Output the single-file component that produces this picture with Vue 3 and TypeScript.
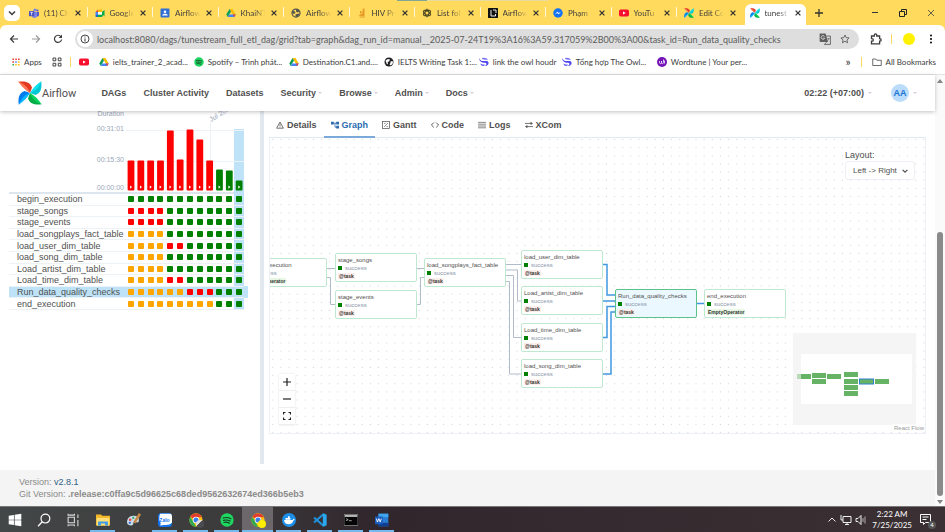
<script setup lang="ts">
interface BrowserTab {
  icon: string
  title: string
  active?: boolean
}

interface Bookmark {
  icon: string
  title: string
  short?: boolean
}

type RunState = 's' | 'f' | 'u'

interface TaskRow {
  name: string
  states: RunState[]
}

interface GraphNode {
  id: string
  x: number
  y: number
  operator: string
  selected?: boolean
}

const browserTabs: BrowserTab[] = [
  { icon: 'teams', title: '(11) Ch' },
  { icon: 'meet', title: 'Google' },
  { icon: 'classroom', title: 'Airflow' },
  { icon: 'drive', title: 'KhaiNT' },
  { icon: 'globe', title: 'Airflow' },
  { icon: 'flame', title: 'HIV Pr' },
  { icon: 'openai', title: 'List fol' },
  { icon: 'notion', title: 'Airflow' },
  { icon: 'messenger', title: 'Phạm' },
  { icon: 'youtube', title: 'YouTu' },
  { icon: 'pinwheel', title: 'Edit Co' },
  { icon: 'pinwheel', title: 'tunest', active: true },
]

const bookmarks: Bookmark[] = [
  { icon: 'drive', title: 'ielts_trainer_2_acad...' },
  { icon: 'spotify', title: 'Spotify – Trình phát...' },
  { icon: 'drive', title: 'Destination.C1.and....' },
  { icon: 'world', title: 'IELTS Writing Task 1:...' },
  { icon: 'swirl', title: 'link the owl houdr', short: true },
  { icon: 'swirl', title: 'Tổng hợp The Owl...' },
  { icon: 'wordtune', title: 'Wordtune | Your per...' },
]

const url =
  'localhost:8080/dags/tunestream_full_etl_dag/grid?tab=graph&dag_run_id=manual__2025-07-24T19%3A16%3A59.317059%2B00%3A00&task_id=Run_data_quality_checks'

const navLinks = [
  { label: 'DAGs', menu: false },
  { label: 'Cluster Activity', menu: false },
  { label: 'Datasets', menu: false },
  { label: 'Security', menu: true },
  { label: 'Browse', menu: true },
  { label: 'Admin', menu: true },
  { label: 'Docs', menu: true },
]

const runs = [30, 30, 30, 30, 60, 31, 61, 51, 30, 21, 20, 10].map((height, i) => ({
  height,
  failed: i < 9,
  x: 118.6 + i * 9.83,
}))

const row = (name: string, states: string): TaskRow => ({
  name,
  states: states.split('') as RunState[],
})

const tasks: TaskRow[] = [
  row('begin_execution', 'ssssssssssss'),
  row('stage_songs', 'ffffssssssss'),
  row('stage_events', 'ffffssssssss'),
  row('load_songplays_fact_table', 'uuuussssssss'),
  row('load_user_dim_table', 'uuuuffssssss'),
  row('load_song_dim_table', 'uuuussssssss'),
  row('Load_artist_dim_table', 'uuuussssssss'),
  row('Load_time_dim_table', 'uuuuffssssss'),
  row('Run_data_quality_checks', 'uuuuuufffsss'),
  row('end_execution', 'uuuuuuuuusss'),
]
const selectedTask = 'Run_data_quality_checks'

const viewTabs = [
  { icon: 'details', label: 'Details' },
  { icon: 'graph', label: 'Graph', active: true },
  { icon: 'gantt', label: 'Gantt' },
  { icon: 'code', label: 'Code' },
  { icon: 'logs', label: 'Logs' },
  { icon: 'xcom', label: 'XCom' },
]

const nodes: GraphNode[] = [
  { id: 'begin_execution', x: -25, y: 120, operator: 'EmptyOperator' },
  { id: 'stage_songs', x: 65, y: 115, operator: '@task' },
  { id: 'stage_events', x: 65, y: 152, operator: '@task' },
  { id: 'load_songplays_fact_table', x: 154, y: 120, operator: '@task' },
  { id: 'load_user_dim_table', x: 251, y: 112, operator: '@task' },
  { id: 'Load_artist_dim_table', x: 251, y: 148, operator: '@task' },
  { id: 'Load_time_dim_table', x: 251, y: 185, operator: '@task' },
  { id: 'load_song_dim_table', x: 251, y: 221, operator: '@task' },
  { id: 'Run_data_quality_checks', x: 345, y: 151, operator: '@task', selected: true },
  { id: 'end_execution', x: 434, y: 151, operator: 'EmptyOperator' },
]

const edges = [
  'M57 130.5H65',
  'M57 139.5H60.5V166.5H65',
  'M147 130.5H154',
  'M147 166.5H150.5V139.5H154',
  'M236 126.5H251',
  'M236 132H247.5V163H251',
  'M236 137.5H243.5V199.5H251',
  'M236 143.5H239.5V236H251',
]
const activeEdges = [
  'M333 126.5H337V157H345',
  'M333 163H345',
  'M333 199.5H337V168.5H345',
  'M333 236H341V174H345',
  'M426 165.5H434',
]

const miniNodes = [
  [4, 41], [19, 40], [19, 46], [34, 41], [51, 39], [51, 46], [51, 52], [51, 58], [82, 46],
]

const taskbarApps = [
  { icon: 'windows', label: 'Start' },
  { icon: 'search', label: 'Search' },
  { icon: 'taskview', label: 'Task view' },
  { icon: 'explorer', label: 'File Explorer', open: true },
  { icon: 'paint', label: 'Paint' },
  { icon: 'zalo', label: 'Zalo', open: true },
  { icon: 'chrome', label: 'Chrome', open: true, badge: 'photo' },
  { icon: 'spotify', label: 'Spotify', open: true },
  { icon: 'chrome', label: 'Chrome', open: true, active: true, badge: 'sun' },
  { icon: 'docker', label: 'Docker', open: true },
  { icon: 'vscode', label: 'VS Code', open: true },
  { icon: 'terminal', label: 'Command Prompt', open: true },
  { icon: 'word', label: 'Word', open: true },
]
</script>

<template>
  <svg class="sprite" aria-hidden="true">
    <symbol id="teams" viewBox="0 0 20 20">
      <circle cx="12" cy="4" r="3.2" fill="#7b83eb" /><circle cx="17" cy="5" r="2.2" fill="#5059c9" />
      <path d="M14 8h6v6a3.5 3.5 0 0 1-6 2z" fill="#5059c9" /><path d="M6 8h10v7a5 5 0 0 1-10 0z" fill="#7b83eb" />
      <rect y="6" width="10.500" height="10.500" rx="1" fill="#4b53bc" /><path d="M2.700 8.500h5M5.200 8.500v6" stroke="#fff" stroke-width="1.500" />
    </symbol>
    <symbol id="meet" viewBox="0 0 20 20">
      <path d="M1 8l5-5v5z" fill="#ea4335" /><path d="M6 3h8v5H6z" fill="#fbbc04" /><path d="M1 8h5v6H1z" fill="#4285f4" />
      <path d="M1 14h5v4H2.500A1.500 1.500 0 0 1 1 16.500z" fill="#1967d2" /><path d="M6 13h8V8l5-4v13l-3-3-2 4H6z" fill="#00a94b" />
      <path d="M6 8h8v5H6z" fill="#fff" />
    </symbol>
    <symbol id="classroom" viewBox="0 0 20 20">
      <rect x="1" y="1" width="18" height="18" rx="2" fill="#2f6fd6" /><circle cx="10" cy="7.500" r="2.600" fill="#fff" />
      <path d="M4.500 15c0-4.500 11-4.500 11 0z" fill="#fff" />
    </symbol>
    <symbol id="drive" viewBox="0 0 20 20">
      <path d="M7 2h6l6.500 11h-6z" fill="#fbbc04" /><path d="M7 2l3 5.200L3.500 18 .5 13z" fill="#0f9d58" />
      <path d="M6.500 13h13l-3 5h-13z" fill="#4285f4" /><path d="M13.500 13h6l-3 5z" fill="#ea4335" />
    </symbol>
    <symbol id="globe" viewBox="0 0 20 20">
      <circle cx="10" cy="10" r="8" fill="none" stroke="#55564d" stroke-width="2.500" />
      <path d="M3 5l5 2 1 3-3 2-4-2zM10 2l5 1 2 4-4 2-3-2zM9 13l6-2 2 3-5 4-3-1z" fill="#55564d" />
    </symbol>
    <symbol id="world" viewBox="0 0 20 20">
      <circle cx="10" cy="10" r="9" fill="#202124" /><path d="M3 7l5-3 4 1-2 4-3 1 1 3-2 2zM13 9l4-1 1 4-4 5-3-2 2-3z" fill="#fff" />
    </symbol>
    <symbol id="flame" viewBox="0 0 20 20">
      <path d="M12 1h3v15H8l-5-1 3-2 4-1zM6 6h3v5H6zM5 17h11v2H5z" fill="#e69a26" />
    </symbol>
    <symbol id="openai" viewBox="0 0 20 20">
      <g fill="none" stroke="#45421f" stroke-width="1.800">
        <ellipse cx="10" cy="10" rx="4" ry="8" /><ellipse cx="10" cy="10" rx="4" ry="8" transform="rotate(60 10 10)" />
        <ellipse cx="10" cy="10" rx="4" ry="8" transform="rotate(120 10 10)" />
      </g>
    </symbol>
    <symbol id="notion" viewBox="0 0 20 20">
      <rect width="20" height="20" rx="1" fill="#111" /><path d="M6 4v12h9v-4M10 4h6v6" fill="none" stroke="#fff" stroke-width="1.800" />
    </symbol>
    <symbol id="messenger" viewBox="0 0 20 20">
      <circle cx="10" cy="10" r="9.500" fill="#1473f5" /><path d="M4 12.500l4.500-5 3 2.500 4.500-2.500-4.500 5-3-2.500z" fill="#fff" />
    </symbol>
    <symbol id="youtube" viewBox="0 0 20 20">
      <rect y="3" width="20" height="14" rx="3.500" fill="#f70f2e" /><path d="M8 7l5.500 3L8 13z" fill="#fff" />
    </symbol>
    <symbol id="spotify" viewBox="0 0 20 20">
      <circle cx="10" cy="10" r="9.500" fill="#1ed760" />
      <path d="M4.500 7.200c4-1.200 8-.8 11.200 1M5 10.500c3.500-1 6.800-.6 9.500 1M5.500 13.500c3-.8 5.500-.4 8 1" fill="none" stroke="#163b24" stroke-width="1.600" stroke-linecap="round" />
    </symbol>
    <symbol id="swirl" viewBox="0 0 20 20">
      <path d="M1 2c1 5 4 6 8 6 5 0 9-1 10 3 1 3-2 7-7 7 2-2 4-4 2-6-2-1-4 0-7-1C2 10 0 6 1 2z" fill="#4f46ee" />
      <path d="M6 2c5-1 10 0 12 4-3-1-5 0-8-1-2 0-4-1-4-3z" fill="#7b74f7" />
      <path d="M3 13c3 2 6 2 9 2-1 2-2 3-4 3-3 0-5-2-5-5z" fill="#6a62f5" />
    </symbol>
    <symbol id="wordtune" viewBox="0 0 20 20">
      <circle cx="10" cy="10" r="10" fill="#7414b8" /><path d="M5 8v3c0 3 4 3 4 0V8v3c0 3 4 3 4 0V5M15 7v6" fill="none" stroke="#fff" stroke-width="1.500" />
    </symbol>
    <symbol id="pinwheel" viewBox="0 0 24 24">
      <g>
        <path d="M.3.800C6 0 12 .5 14 6.500L12 12C9 7.500 5.500 4 .3.800z" fill="#e43921" />
        <path d="M.3.800C6 3 10 6 12 12 8 10 3.500 5.500 .3.800z" fill="#ff7557" />
      </g>
      <g transform="rotate(90 12 12)">
        <path d="M.3.800C6 0 12 .5 14 6.500L12 12C9 7.500 5.500 4 .3.800z" fill="#00c7d4" />
        <path d="M.3.800C6 3 10 6 12 12 8 10 3.500 5.500 .3.800z" fill="#11e1ee" />
      </g>
      <g transform="rotate(180 12 12)">
        <path d="M.3.800C6 0 12 .5 14 6.500L12 12C9 7.500 5.500 4 .3.800z" fill="#00ad46" />
        <path d="M.3.800C6 3 10 6 12 12 8 10 3.500 5.500 .3.800z" fill="#04d659" />
      </g>
      <g transform="rotate(270 12 12)">
        <path d="M.3.800C6 0 12 .5 14 6.500L12 12C9 7.500 5.500 4 .3.800z" fill="#017cee" />
        <path d="M.3.800C6 3 10 6 12 12 8 10 3.500 5.500 .3.800z" fill="#0cb6ff" />
      </g>
    </symbol>
    <symbol id="close" viewBox="0 0 10 10"><path d="M2 2l6 6M8 2L2 8" stroke="currentColor" stroke-width="1.600" /></symbol>
    <symbol id="caret" viewBox="0 0 10 10"><path d="M0 2.500h10L5 7.500z" fill="currentColor" /></symbol>
    <symbol id="chevron" viewBox="0 0 10 10"><path d="M2 3.500l3 3 3-3" fill="none" stroke="currentColor" stroke-width="1.500" /></symbol>
    <symbol id="back" viewBox="0 0 20 20"><path d="M18 10H3M10 3l-7 7 7 7" fill="none" stroke="currentColor" stroke-width="2.400" /></symbol>
    <symbol id="reload" viewBox="0 0 20 20">
      <path d="M16 5.500A7.200 7.200 0 1 0 17.200 11" fill="none" stroke="currentColor" stroke-width="2.400" /><path d="M18 1v7h-7z" fill="currentColor" />
    </symbol>
    <symbol id="info" viewBox="0 0 20 20">
      <circle cx="10" cy="10" r="8" fill="none" stroke="currentColor" stroke-width="1.800" /><path d="M10 9v6M10 5v2" stroke="currentColor" stroke-width="2" />
    </symbol>
    <symbol id="translate" viewBox="0 0 20 20">
      <path d="M1 1h10l4 14H3a2 2 0 0 1-2-2z" fill="#606060" /><path d="M12 5h7v14H9l4-4" fill="none" stroke="#606060" stroke-width="1.500" />
      <path d="M9 5.500a3 3 0 1 0 .5 3H7" fill="none" stroke="#dedede" stroke-width="1.400" /><path d="M13.500 9.500h4.500M16 8v2l-2 4" fill="none" stroke="#606060" />
    </symbol>
    <symbol id="star" viewBox="0 0 20 20">
      <path d="M10 2l2.400 5.300 5.800.6-4.300 3.900 1.200 5.700-5.100-3-5.100 3 1.200-5.700L1.800 7.900l5.800-.6z" fill="none" stroke="currentColor" stroke-width="1.700" />
    </symbol>
    <symbol id="puzzle" viewBox="0 0 20 20">
      <path d="M2.500 5h4.800V3.500a2 2 0 0 1 4 0V5H16v4.500h.5a2 2 0 0 1 0 4H16V18H2.500v-4.500h1a2 2 0 0 0 0-4h-1z" fill="none" stroke="currentColor" stroke-width="2.200" />
    </symbol>
    <symbol id="dots" viewBox="0 0 20 20"><circle cx="10" cy="3" r="2" /><circle cx="10" cy="10" r="2" /><circle cx="10" cy="17" r="2" /></symbol>
    <symbol id="apps" viewBox="0 0 20 20">
      <path d="M1 1h4v4H1zM8 1h4v4H8zM15 1h4v4h-4zM1 8h4v4H1z" fill="#ea4335" /><path d="M8 8h4v4H8z" fill="#4285f4" />
      <path d="M15 8h4v4h-4zM8 15h4v4H8z" fill="#fbbc04" /><path d="M1 15h4v4H1z" fill="#34a853" /><path d="M15 15h4v4h-4z" fill="#fbbc04" />
    </symbol>
    <symbol id="groups" viewBox="0 0 20 20">
      <path d="M2 2h5.500v5.500H2zM12.500 2H18v5.500h-5.500zM2 12.500h5.500V18H2zM12.500 12.500H18V18h-5.500z" fill="none" stroke="#444" stroke-width="2" />
    </symbol>
    <symbol id="folder" viewBox="0 0 20 20"><path d="M1.500 4h6l2 2.500h9V17h-17z" fill="none" stroke="currentColor" stroke-width="1.500" /></symbol>
    <symbol id="details" viewBox="0 0 20 20"><path d="M10 2.500L18.500 18h-17z" fill="none" stroke="currentColor" stroke-width="2" /><path d="M10 7v5M10 13.500v2.500" stroke="currentColor" stroke-width="2" /></symbol>
    <symbol id="graph" viewBox="0 0 20 20"><path d="M0 2h7v7H0zM13 2h7v7h-7zM13 12h7v7h-7z" fill="currentColor" /><path d="M6 5.500h8M10 5v10.500h4" fill="none" stroke="currentColor" stroke-width="2" /></symbol>
    <symbol id="gantt" viewBox="0 0 20 20"><rect x="1.500" y="1.500" width="17" height="17" fill="none" stroke="currentColor" stroke-width="1.800" /><path d="M5 15L15 5M5 6h4M11 14h4" stroke="currentColor" stroke-width="1.500" /></symbol>
    <symbol id="code" viewBox="0 0 20 20"><path d="M7 4l-6 6 6 6M13 4l6 6-6 6" fill="none" stroke="currentColor" stroke-width="2.400" /></symbol>
    <symbol id="logs" viewBox="0 0 20 20"><path d="M0 3.500h20M0 8h20M0 12.500h20M0 17h20" stroke="currentColor" stroke-width="1.700" /></symbol>
    <symbol id="xcom" viewBox="0 0 20 20"><path d="M0 6h16M4 14h16" stroke="currentColor" stroke-width="2" /><path d="M14 2l6 4-6 4zM6 10l-6 4 6 4z" fill="currentColor" /></symbol>
    <symbol id="windows" viewBox="0 0 20 20"><path d="M1 4l7.500-1.300v6.800H1zM9.500 2.500L19 1v8.500H9.500zM1 10.500h7.500v6.800L1 16zM9.500 10.500H19V19l-9.500-1.500z" fill="#fff" /></symbol>
    <symbol id="search" viewBox="0 0 20 20"><circle cx="12" cy="8" r="6.300" fill="none" stroke="#fff" stroke-width="1.700" /><path d="M7.500 12.500L1.500 19" stroke="#fff" stroke-width="1.800" /></symbol>
    <symbol id="taskview" viewBox="0 0 20 20"><path d="M3 6h9v8H3zM3 1v2h9V1M3 19v-2h9v2M17 2v5M17 10v9" fill="none" stroke="#ddd" stroke-width="1.500" /></symbol>
    <symbol id="explorer" viewBox="0 0 20 20"><path d="M0 2h7l2 2h11v14H0z" fill="#f2b929" /><path d="M1 7h18v11H1z" fill="#ffdf79" /><path d="M3 18v-6h14v6h-4v-3H7v3z" fill="#3c9be8" /></symbol>
    <symbol id="paint" viewBox="0 0 20 20">
      <path d="M9 4C3 4 0 9 0 13s4 6 8 4c2-1 0-4 3-4s6 2 6-3-3-6-8-6z" fill="#c8dbe8" /><circle cx="4.500" cy="9.500" r="1.800" fill="#e44" /><circle cx="9" cy="7" r="1.600" fill="#3a6" /><circle cx="4" cy="14" r="1.600" fill="#36c" />
      <path d="M9 13L17 0l3 2-8 13z" fill="#c98843" />
    </symbol>
    <symbol id="zalo" viewBox="0 0 20 20"><rect width="20" height="20" rx="5" fill="#1272ee" /><path d="M3 1h15q2 1 2 4v9q-4 4-11 3l-6 1 1-3q-4-6-1-14z" fill="#fff" /></symbol>
    <symbol id="chrome" viewBox="0 0 20 20">
      <circle cx="10" cy="10" r="9.500" fill="#fbc116" /><path d="M10 10L1.800 5.200A9.500 9.500 0 0 1 18.500 6H10z" fill="#e33b2e" /><path d="M1.800 5.200L7 14l3 5.500A9.500 9.500 0 0 1 1.800 5.200z" fill="#2da94f" />
      <circle cx="10" cy="10" r="4.600" fill="#fff" /><circle cx="10" cy="10" r="3.600" fill="#3b7de9" />
    </symbol>
    <symbol id="docker" viewBox="0 0 20 20"><circle cx="10" cy="10" r="10" fill="#1d8fe8" /><path d="M3 10h12l2-2 1 1.500-2 1.500c-1 4-4 5-7 5-4 0-6-3-6-6zM5 7h7v2.500H5zM8.500 4.500H11V7H8.500z" fill="#fff" /></symbol>
    <symbol id="vscode" viewBox="0 0 20 20"><path d="M1.500 6.500L14.500 18M1.500 13.500L14.500 2" fill="none" stroke="#1f94dd" stroke-width="2.800" /><path d="M14 0l5.500 2.500v15L14 20z" fill="#2ba7f0" /></symbol>
    <symbol id="terminal" viewBox="0 0 20 20"><rect y="2" width="20" height="16" fill="#050505" stroke="#999" /><path d="M1 3h18v2.500H1z" fill="#ccc" /><path d="M3 8l3 1.500L3 11M7 11h4" fill="none" stroke="#ddd" /></symbol>
    <symbol id="word" viewBox="0 0 20 20"><path d="M5 1h14v18H5z" fill="#2b7cd3" /><path d="M5 1h14v5H5z" fill="#41a5ee" /><path d="M5 14h14v5H5z" fill="#103f91" /><path d="M0 5h11v11H0z" fill="#185abd" /><path d="M2 8l1.500 5L5.500 8l2 5L9 8" fill="none" stroke="#fff" stroke-width="1.300" /></symbol>
  </svg>

  <div class="window">
    <header class="browser">
      <div class="tab-strip">
        <span class="progress"></span>
        <button class="tab-search" aria-label="Search tabs"><svg class="i10"><use href="#chevron" /></svg></button>
        <nav class="tabs" aria-label="Browser tabs">
          <div v-for="(t, i) in browserTabs" :key="i" class="tab" :class="{ active: t.active, before: i === 10 }">
            <svg class="i10"><use :href="'#' + t.icon" /></svg>
            <span class="tab-title">{{ t.title }}</span>
            <button class="tab-close" aria-label="Close tab"><svg class="i8"><use href="#close" /></svg></button>
          </div>
        </nav>
        <button class="new-tab" aria-label="New tab"><svg class="i8" viewBox="0 0 8 8"><path d="M4 0v8M0 4h8" stroke="#333" stroke-width="1.300" /></svg></button>
        <div class="window-controls">
          <button aria-label="Minimize"><svg class="i8" viewBox="0 0 8 8"><path d="M1 3.500h6" stroke="#333" /></svg></button>
          <button aria-label="Restore"><svg class="i8" viewBox="0 0 8 8"><path d="M.5 2.500h5v5h-5zM2.500 2V.5h5v5H6" fill="none" stroke="#222" /></svg></button>
          <button aria-label="Close"><svg class="i8" viewBox="0 0 8 8"><path d="M1 1l6 6M7 1L1 7" stroke="#444" stroke-width=".8" /></svg></button>
        </div>
      </div>

      <div class="address-row">
        <button aria-label="Back"><svg class="i10"><use href="#back" /></svg></button>
        <button class="forward" aria-label="Forward"><svg class="i10"><use href="#back" /></svg></button>
        <button aria-label="Reload"><svg class="i10"><use href="#reload" /></svg></button>
        <div class="omnibox">
          <span class="site-info"><svg class="i10"><use href="#info" /></svg></span>
          <input class="url" type="text" aria-label="Address" :value="url" />
          <button aria-label="Translate"><svg class="i12"><use href="#translate" /></svg></button>
          <button aria-label="Bookmark"><svg class="i10"><use href="#star" /></svg></button>
        </div>
        <div class="browser-tools">
          <button aria-label="Extensions"><svg class="i12"><use href="#puzzle" /></svg></button>
          <span class="bar"></span>
          <button class="profile" aria-label="Profile"></button>
          <button aria-label="Menu"><svg class="i10"><use href="#dots" /></svg></button>
        </div>
      </div>

      <nav class="bookmarks" aria-label="Bookmarks">
        <a href="#" class="mark-apps"><svg class="i8"><use href="#apps" /></svg>Apps</a>
        <a href="#" class="mark-groups" aria-label="Tab groups"><svg class="i10"><use href="#groups" /></svg></a>
        <span class="bar"></span>
        <a href="#" class="mark-video" aria-label="YouTube"><svg class="i10"><use href="#youtube" /></svg></a>
        <a v-for="b in bookmarks" :key="b.title" href="#" class="mark" :class="{ short: b.short }">
          <svg class="i10"><use :href="'#' + b.icon" /></svg>{{ b.title }}
        </a>
        <div class="mark-end">
          <span class="more">»</span>
          <span class="bar"></span>
          <a href="#"><svg class="i10"><use href="#folder" /></svg>All Bookmarks</a>
        </div>
      </nav>
    </header>

    <div class="viewport">
      <div class="page">
        <header class="navbar">
          <a href="#" class="brand"><svg class="logo"><use href="#pinwheel" /></svg>Airflow</a>
          <nav class="nav-links">
            <a v-for="l in navLinks" :key="l.label" href="#">{{ l.label }}<svg v-if="l.menu" class="i4"><use href="#caret" /></svg></a>
          </nav>
          <div class="nav-end">
            <a href="#">02:22 (+07:00)<svg class="i4"><use href="#caret" /></svg></a>
            <a href="#" class="user"><span class="avatar">AA</span><svg class="i4"><use href="#caret" /></svg></a>
          </div>
        </header>

        <main class="content">
          <section class="runs">
            <svg class="duration-chart" width="239" height="83">
              <rect x="225" y="18" width="10" height="65" fill="#bee3f8" />
              <path d="M117 19.500H235M117 50.500H235M201.500 12V82" stroke="#edf2f7" />
              <g class="axis" text-anchor="end">
                <text x="115" y="5">Duration</text>
                <text x="115" y="20">00:31:01</text>
                <text x="115" y="51">00:15:30</text>
                <text x="115" y="79">00:00:00</text>
              </g>
              <text class="axis" transform="translate(202 11) rotate(-32)">Jul 2025</text>
              <g v-for="r in runs" :key="r.x">
                <rect :x="r.x" :y="79.500 - r.height" width="6.800" :height="r.height" rx="1" :fill="r.failed ? '#f00' : '#008000'" />
                <path :d="`M${r.x + 2.500} 74.500v3.200l2-1.600z`" fill="#fff" />
              </g>
              <path d="M0 82H225" stroke="#dde5ee" stroke-width="2" />
            </svg>
            <table class="task-grid">
              <colgroup><col class="col-name" /><col v-for="n in 12" :key="n" /><col class="col-end" /></colgroup>
              <tbody>
                <tr v-for="t in tasks" :key="t.name" :class="{ selected: t.name === selectedTask }">
                  <th scope="row">{{ t.name }}</th>
                  <td v-for="(s, i) in t.states" :key="i"><span class="cell" :class="s"></span></td>
                  <td class="pad"></td>
                </tr>
              </tbody>
            </table>
          </section>

          <div class="divider"></div>

          <section class="details">
            <div class="view-tabs" role="tablist">
              <button v-for="v in viewTabs" :key="v.label" role="tab" :class="{ active: v.active }">
                <svg class="i8"><use :href="'#' + v.icon" /></svg>{{ v.label }}
              </button>
            </div>
            <div class="canvas">
              <svg class="edges">
                <defs>
                  <pattern id="grid-dots" x="-1.300" y="-2.500" width="8.140" height="8.140" patternUnits="userSpaceOnUse">
                    <circle cx="4" cy="4" r=".6" fill="#d0d4da" />
                  </pattern>
                </defs>
                <rect width="100%" height="100%" fill="url(#grid-dots)" />
                <path v-for="d in edges" :key="d" :d="d" class="edge" />
                <path v-for="d in activeEdges" :key="d" :d="d" class="edge live" />
              </svg>
              <article v-for="n in nodes" :key="n.id" class="node" :class="{ chosen: n.selected }" :style="{ left: n.x + 'px', top: n.y + 'px' }">
                <div class="node-name">{{ n.id }}</div>
                <div class="node-state"><span></span>success</div>
                <div class="node-op" :class="{ empty: n.operator !== '@task' }">{{ n.operator }}</div>
              </article>

              <div class="layout-box">
                <label for="layout">Layout:</label>
                <div class="select-wrap">
                  <select id="layout"><option>Left -&gt; Right</option></select>
                  <svg class="i8"><use href="#chevron" /></svg>
                </div>
              </div>

              <div class="zoom-controls">
                <button aria-label="Zoom in"><svg class="i8" viewBox="0 0 8 8"><path d="M4 0v8M0 4h8" stroke="#222" stroke-width="1.200" /></svg></button>
                <button aria-label="Zoom out"><svg class="i8" viewBox="0 0 8 8"><path d="M0 4h8" stroke="#222" stroke-width="1.200" /></svg></button>
                <button aria-label="Fit view"><svg class="i8" viewBox="0 0 8 8"><path d="M.5 2.500v-2h2M5.500.5h2v2M7.500 5.500v2h-2M2.500 7.500h-2v-2" fill="none" stroke="#222" stroke-width="1.200" /></svg></button>
              </div>

              <svg class="minimap" width="123" height="92">
                <rect width="123" height="92" fill="#f5f5f5" />
                <rect x="8" y="21" width="111" height="50" fill="#fff" />
                <rect v-for="(m, i) in miniNodes" :key="i" :x="m[0]" :y="m[1]" width="14" height="5" fill="#66b366" />
                <rect x="4" y="41" width="4" height="5" fill="#b9d9b9" />
                <rect x="66.500" y="46" width="14" height="5" fill="#66b366" stroke="#3182ce" />
              </svg>
              <a href="#" class="credit">React Flow</a>
            </div>
          </section>
        </main>

        <footer class="footer">
          <div>Version: <a href="#">v2.8.1</a></div>
          <div>Git Version: <strong>.release:c0ffa9c5d96625c68ded9562632674ed366b5eb3</strong></div>
        </footer>
      </div>

      <div class="scrollbar" aria-hidden="true">
        <span class="arrow up"></span>
        <div class="track"><div class="thumb"></div></div>
        <span class="arrow down"></span>
      </div>
    </div>

    <footer class="taskbar">
      <button v-for="(a, i) in taskbarApps" :key="i" class="app" :class="{ open: a.open, active: a.active }" :aria-label="a.label">
        <svg class="i14"><use :href="'#' + a.icon" /></svg>
        <span v-if="a.icon === 'zalo'" class="zalo-text">Zalo</span>
        <span v-if="a.badge" class="app-badge" :class="a.badge"></span>
      </button>
      <div class="tray">
        <svg class="i10" viewBox="0 0 10 10"><path d="M1.500 6.500L5 3l3.500 3.500" fill="none" stroke="#eee" /></svg>
        <svg class="i12" viewBox="0 0 12 12"><path d="M3 2.500h8v6H3zM5 10.500h4M7 8.500v2M1 1v5h2" fill="none" stroke="#eee" /></svg>
        <svg class="i12" viewBox="0 0 12 12"><path d="M1 4.500h2l3-3v9l-3-3H1z" fill="none" stroke="#eee" /><path d="M8 4v4M10 2.500v7" stroke="#ccc" stroke-width=".8" /></svg>
        <div class="clock"><span>2:22 AM</span><span>7/25/2025</span></div>
        <div class="notify">
          <svg class="i14" viewBox="0 0 14 14"><path d="M1.500 1.500h10v8h-5l-2 2v-2h-3zM3.500 4h6M3.500 6.500h4" fill="none" stroke="#fff" /></svg>
          <span class="count">4</span>
        </div>
      </div>
    </footer>
  </div>
</template>

<style>
body {
  margin: 0;
  background: #fff;
}
</style>

<style scoped>
* {
  box-sizing: border-box;
}
.sprite {
  display: none;
}
.window {
  display: flex;
  flex-direction: column;
  min-height: 100vh;
  font-family: "Liberation Sans", Arial, sans-serif;
  font-size: 9px;
  color: #51504f;
}
button {
  display: flex;
  flex: none;
  align-items: center;
  justify-content: center;
  padding: 0;
  border: 0;
  background: none;
  font: inherit;
  color: inherit;
}
a {
  color: inherit;
  text-decoration: none;
}
svg {
  flex: none;
}
.i4 { width: 4px; height: 4px; }
.i8 { width: 8px; height: 8px; }
.i10 { width: 10px; height: 10px; }
.i12 { width: 12px; height: 12px; }
.i14 { width: 14px; height: 14px; }

/* Browser chrome */
.browser {
  background: #ffda5c;
  font-family: Lato, "Open Sans", sans-serif;
  font-size: 8px;
  color: #3c3c3c;
}
.tab-strip {
  position: relative;
  display: flex;
  align-items: center;
  height: 25px;
}
.progress {
  position: absolute;
  top: 0;
  left: 42%;
  width: 16%;
  height: 1px;
  background: linear-gradient(90deg, #7fa793 20%, #e8dc9c 20%);
}
.tab-search {
  width: 16px;
  height: 16px;
  margin: 0 4px;
  border-radius: 5px;
  background: #fff;
}
.tabs {
  display: flex;
  flex: 0 1 786px;
  align-self: stretch;
  min-width: 0;
}
.tab {
  position: relative;
  display: flex;
  flex: 1 1 0;
  align-items: center;
  min-width: 0;
  height: 21px;
  margin: 4px 4px 0 0;
  padding: 0 0 4px 5px;
}
.tab::after {
  content: "";
  position: absolute;
  right: -2px;
  top: 3px;
  width: 1px;
  height: 10px;
  background: #fff6d8;
}
.tab.active {
  border-radius: 6px 6px 0 0;
  background: #fff;
}
.tab.active::after,
.tab.before::after {
  display: none;
}
.tab-title {
  flex: 1;
  min-width: 0;
  margin-left: 5px;
  white-space: nowrap;
  mask-image: linear-gradient(90deg, #000 55%, transparent);
}
.tab-close {
  width: 8px;
  margin: 0 4px 0 5px;
  color: #333;
}
.new-tab {
  width: 18px;
}
.window-controls {
  display: flex;
  gap: 20px;
  margin-left: auto;
  padding-right: 10px;
}
.address-row {
  display: flex;
  align-items: center;
  height: 28px;
  border-radius: 6px 6px 0 0;
  padding: 0 9px;
  background: #fff;
  gap: 12px;
}
.forward {
  transform: scaleX(-1);
  color: #999;
}
.omnibox {
  display: flex;
  flex: 1;
  align-items: center;
  gap: 9px;
  height: 20px;
  margin-right: -1px;
  padding: 0 9px 0 2px;
  border-radius: 10px;
  background: #dedede;
  color: #555;
}
.site-info {
  display: grid;
  place-items: center;
  width: 16px;
  height: 16px;
  border-radius: 50%;
  background: #fff;
  color: #333;
}
.url {
  flex: 1;
  min-width: 0;
  height: 16px;
  margin-left: -5px;
  padding: 0;
  border: 0;
  outline: 0;
  background: none;
  font: 9px Lato, "Open Sans", sans-serif;
  color: #5c5c5c;
}
.browser-tools {
  display: flex;
  align-items: center;
  gap: 9px;
}
.bar {
  width: 1px;
  height: 10px;
  background: #fbd75f;
}
.profile {
  width: 12px;
  height: 12px;
  margin: 0 2px;
  border-radius: 50%;
  background: #fff200;
}
.bookmarks {
  display: flex;
  align-items: center;
  gap: 13px;
  height: 22px;
  padding: 0 9px 4px 12px;
  border-bottom: 1px solid #e2e2e2;
  background: #fff;
  white-space: nowrap;
}
.bookmarks a {
  display: flex;
  flex: none;
  align-items: center;
  gap: 4px;
}
.bookmarks > .bar {
  margin-left: -5px;
}
.mark-groups {
  margin-left: -3px;
}
.mark-video {
  margin: 0 -3px 0 -5px;
}
.bookmarks .mark {
  width: 82px;
}
.bookmarks .short {
  width: 70px;
}
.mark-end {
  display: flex;
  align-items: center;
  gap: 10px;
  margin-left: auto;
}
.more {
  font-size: 12px;
}

/* Airflow page */
.viewport {
  display: flex;
  flex: 1;
}
.page {
  display: flex;
  flex: 1;
  flex-direction: column;
  min-width: 0;
}
.navbar {
  position: relative;
  z-index: 2;
  display: flex;
  align-items: center;
  height: 36px;
  padding: 0 18px;
  background: #fff;
  box-shadow: 0 1px 4px rgba(0, 0, 0, 0.25);
  font-weight: bold;
}
.brand {
  display: flex;
  align-items: center;
  margin-right: 17px;
  font: 11px Roboto, sans-serif;
}
.logo {
  width: 24px;
  height: 24px;
}
.nav-links {
  display: flex;
}
.nav-links a {
  display: flex;
  align-items: center;
  gap: 2px;
  padding: 0 9px 0 8px;
}
.navbar .i4 {
  color: #dccbdc;
}
.nav-end {
  display: flex;
  align-items: center;
  gap: 19px;
  margin-left: auto;
}
.nav-end a {
  display: flex;
  align-items: center;
  gap: 4px;
}
.avatar {
  display: grid;
  place-items: center;
  width: 18px;
  height: 18px;
  border-radius: 50%;
  background: #bbdcfa;
  color: #1a76d2;
}
.content {
  display: flex;
  flex: 1;
  padding-bottom: 6px;
}
.runs {
  flex: none;
  width: 260px;
  padding-left: 9px;
}
.duration-chart {
  display: block;
  overflow: visible;
}
.axis {
  font-size: 7px;
  fill: #9aa8ba;
}
.task-grid {
  width: 239px;
  height: 116px;
  table-layout: fixed;
  border-collapse: collapse;
}
.col-name {
  width: 117px;
}
.col-end {
  width: 4px;
}
.task-grid th,
.task-grid td {
  padding: 0;
  border-bottom: 1px solid #edf2f7;
  line-height: 10px;
}
.task-grid th {
  padding-left: 8px;
  font-weight: normal;
  text-align: left;
  white-space: nowrap;
}
.task-grid td:nth-last-child(2),
.task-grid .selected > * {
  background: #bee3f8;
}
.task-grid .pad {
  border: 0;
}
.cell {
  display: block;
  width: 6px;
  height: 6px;
  margin: 0 auto;
  border-radius: 1px;
}
.cell.s { background: #008000; }
.cell.f { background: #ff0000; }
.cell.u { background: #ffa500; }
.divider {
  flex: none;
  width: 4px;
  background: #e2e8f0;
}
.details {
  display: flex;
  flex: 1;
  flex-direction: column;
  min-width: 0;
  padding: 0 9px 30px 5px;
}
.view-tabs {
  display: flex;
  height: 27px;
  border-bottom: 1px solid #e2e8f0;
}
.view-tabs button {
  gap: 3px;
  height: 27px;
  padding: 2px 7px 0;
  border-bottom: 2px solid transparent;
  font-weight: bold;
}
.view-tabs .active {
  border-color: #7aa9da;
  color: #2b6cb0;
}
.canvas {
  position: relative;
  flex: 1;
  min-height: 290px;
  border: 1px solid #edf0f4;
  border-top: 0;
  overflow: hidden;
}
.edges {
  display: block;
  position: absolute;
  width: 100%;
  height: 100%;
}
.edge {
  fill: none;
  stroke: #b1bccb;
}
.edge.live {
  stroke: #4299e1;
  stroke-width: 1.5px;
}
.node {
  position: absolute;
  width: 82px;
  height: 29px;
  padding: 2px;
  border: 1px solid #bfe8d0;
  border-radius: 2px;
  background: #fff;
  font-size: 6px;
  line-height: 8px;
  white-space: nowrap;
}
.node.chosen {
  border-color: #5cc28c;
  background: #ebf8ff;
}
.node-state {
  display: flex;
  align-items: center;
  gap: 3px;
  color: #8a96aa;
}
.node-state span {
  width: 4px;
  height: 4px;
  background: #008000;
}
.node-op {
  width: fit-content;
  margin-top: 1px;
  padding: 0 1px;
  border-radius: 1px;
  background: #fdeee9;
  font-size: 5px;
  font-weight: bold;
  line-height: 6px;
  color: #333;
}
.node-op.empty {
  background: #e8f7e4;
}
.layout-box {
  position: absolute;
  top: 11px;
  right: 10px;
  width: 70px;
  line-height: 12px;
}
.select-wrap {
  display: flex;
  align-items: center;
  height: 19px;
  border: 1px solid #edf0f4;
  border-radius: 3px;
  background: #fff;
}
.select-wrap select {
  flex: 1;
  padding: 0 0 0 7px;
  border: 0;
  appearance: none;
  background: none;
  font: 8px "Liberation Sans", Arial, sans-serif;
  color: inherit;
}
.select-wrap svg {
  margin-right: 5px;
}
.zoom-controls {
  position: absolute;
  bottom: 8px;
  left: 9px;
  background: #fff;
  box-shadow: 0 0 2px rgba(0, 0, 0, 0.12);
}
.zoom-controls button {
  width: 16px;
  height: 17px;
  border-bottom: 1px solid #eee;
}
.minimap {
  position: absolute;
  right: 9px;
  bottom: 8px;
}
.credit {
  position: absolute;
  right: 0;
  bottom: 1px;
  padding: 0 1px;
  background: rgba(255, 255, 255, 0.6);
  font-size: 6px;
  line-height: 8px;
  color: #999;
}
.footer {
  padding: 6px 19px;
  background: #f4f4f4;
  line-height: 12px;
  color: #8a8a8a;
}
.footer a {
  color: #2f5f86;
}
.scrollbar {
  display: flex;
  flex: none;
  flex-direction: column;
  align-items: center;
  width: 10px;
  padding: 4px 0 2px;
  background: #fafafa;
}
.arrow {
  border: 3px solid transparent;
}
.arrow.up {
  border-top: 0;
  border-bottom: 4px solid #858585;
}
.arrow.down {
  border-bottom: 0;
  border-top: 4px solid #858585;
}
.track {
  display: flex;
  flex: 1;
  flex-direction: column;
  justify-content: flex-end;
  padding-bottom: 4px;
}
.thumb {
  width: 6px;
  height: 64%;
  border-radius: 3px;
  background: #8a8a8a;
}

/* Windows taskbar */
.taskbar {
  display: flex;
  height: 26px;
  border-top: 1px solid #777;
  background: linear-gradient(90deg, #434747, #3c3a3b 25%, #30262c 40%, #3b3134);
}
.app {
  position: relative;
  width: 31px;
}
.app:nth-child(-n + 3) {
  width: 29px;
}
.app.active {
  background: #6b676b;
}
.app.open::after {
  content: "";
  position: absolute;
  right: 3px;
  bottom: 0;
  left: 3px;
  height: 2px;
  background: #76b9ed;
}
.app.active::after {
  right: 0;
  left: 0;
}
.zalo-text {
  position: absolute;
  font-size: 5px;
  font-weight: bold;
  color: #1272ee;
}
.app-badge {
  position: absolute;
  right: 7px;
  bottom: 4px;
  width: 8px;
  height: 8px;
  border-radius: 50%;
}
.app-badge.sun {
  background: #ffee00;
}
.app-badge.photo {
  background: linear-gradient(135deg, #ddd 40%, #4c4c50 40%);
}
.tray {
  display: flex;
  align-items: center;
  gap: 3px;
  margin-left: auto;
  padding-right: 12px;
  color: #fff;
}
.clock {
  display: flex;
  flex-direction: column;
  align-items: center;
  margin: 0 4px 0 2px;
  font: 8px Lato, sans-serif;
  line-height: 11px;
}
.notify {
  position: relative;
  display: flex;
}
.count {
  position: absolute;
  right: -3px;
  bottom: -2px;
  width: 8px;
  height: 8px;
  border-radius: 50%;
  background: #555;
  font-size: 6px;
  line-height: 8px;
  text-align: center;
}
</style>
